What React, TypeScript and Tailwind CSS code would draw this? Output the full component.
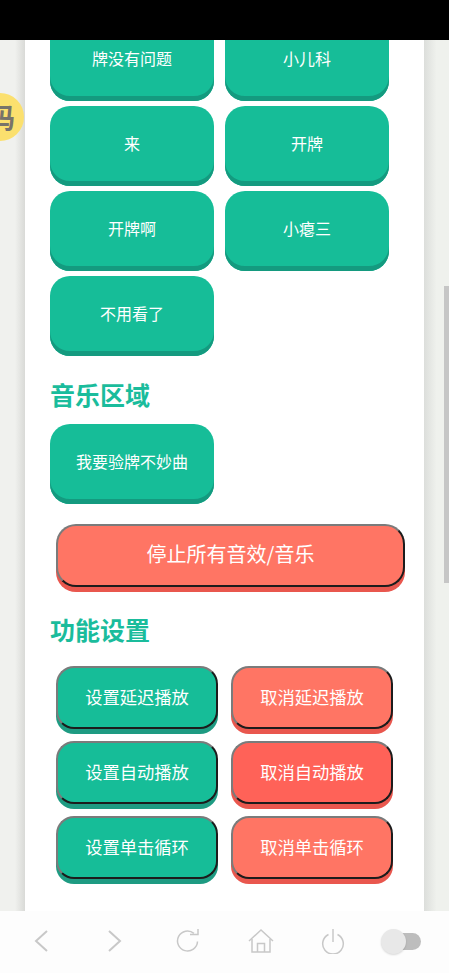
const font = "font-['Noto_Sans_CJK_SC','Noto_Sans',sans-serif]";

const soundRows = [
  ["牌没有问题", "小儿科"],
  ["来", "开牌"],
  ["开牌啊", "小瘪三"],
  ["不用看了"],
];

const settings = [
  ["设置延迟播放", "取消延迟播放", "bg-[#ff7564]"],
  ["设置自动播放", "取消自动播放", "bg-[#ff6258]"],
  ["设置单击循环", "取消单击循环", "bg-[#ff7564]"],
];

function SoundButton({ label }: { label: string }) {
  return (
    <button className="flex h-20 w-[164px] items-center justify-center rounded-[20px] bg-[#16bd98] pb-[7px] text-base text-white shadow-[inset_0_-5px_0_#149a7f]">
      {label}
    </button>
  );
}

function SettingButton({ label, red, face }: { label: string; red?: boolean; face?: string }) {
  return (
    <button
      className={`flex h-[63px] w-[162px] items-center justify-center rounded-[18px] border-2 border-t-[#7b7b7b] border-r-[#1c1c1c] border-b-[#1c1c1c] border-l-[#7b7b7b] pb-[2px] text-[17.3px] text-white ${
        red ? `${face} shadow-[0_5px_0_#e9574e]` : "bg-[#16bd98] shadow-[0_5px_0_#1e9b82]"
      }`}
    >
      {label}
    </button>
  );
}

export default function App() {
  return (
    <div className={`flex h-[973px] w-[449px] flex-col overflow-hidden bg-white ${font}`}>
      <div className="h-10 shrink-0 bg-black" />
      <div className="relative flex h-[871px] shrink-0 overflow-hidden">
        <div className="w-[25px] shrink-0 bg-gradient-to-r from-[#f0f1ee] from-60% to-[#d9dad7]" />
        <div className="w-[399px] shrink-0 bg-white pl-[25px]">
          <div className="-mt-[19px] grid grid-cols-[164px_164px] gap-x-[11px] gap-y-[5px]">
            {soundRows.flat().map((label) => (
              <SoundButton key={label} label={label} />
            ))}
          </div>
          <h2 className="mt-5 h-[36px] text-[25px] leading-[36px] font-bold text-[#1abc9c]">音乐区域</h2>
          <div className="mt-3">
            <SoundButton label="我要验牌不妙曲" />
          </div>
          <button className="mt-5 ml-[6px] flex h-[63px] w-[349px] items-center justify-center rounded-[20px] border-2 border-t-[#7b7b7b] border-r-[#1c1c1c] border-b-[#1c1c1c] border-l-[#7b7b7b] bg-[#ff7564] pb-[3px] text-xl text-white shadow-[0_5px_0_#e9574e]">
            停止所有音效/音乐
          </button>
          <h2 className="mt-6 h-[36px] text-[25px] leading-[36px] font-bold text-[#1abc9c]">功能设置</h2>
          <div className="mt-[19px] ml-[6px] flex flex-col gap-[12px]">
            {settings.map(([left, right, face]) => (
              <div key={left} className="flex gap-[13px]">
                <SettingButton label={left} />
                <SettingButton label={right} red face={face} />
              </div>
            ))}
          </div>
        </div>
        <div className="relative w-[25px] shrink-0 bg-gradient-to-r from-[#dcdedb] to-[#eff1ed] to-50%">
          <div className="absolute top-[246px] right-0 h-[297px] w-[5px] bg-[#c6c6c6]" />
        </div>
        <div className="absolute top-[53px] -left-[24px] flex h-12 w-12 items-center justify-end rounded-full bg-[#fbe06e] pr-[9px] text-[28px] font-bold text-[#77736a]">
          码
        </div>
      </div>
      <nav className="flex h-[62px] shrink-0 items-center bg-[#fdfdfd] pb-[2px] text-[#c8c8c8]">
        <svg className="ml-[33px]" width="16" height="24" viewBox="0 0 16 24" fill="none" stroke="currentColor" strokeWidth="2">
          <path d="M14 2 3 12l11 10" />
        </svg>
        <svg className="ml-[57px]" width="16" height="24" viewBox="0 0 16 24" fill="none" stroke="currentColor" strokeWidth="2">
          <path d="M3 2l11 10L3 22" />
        </svg>
        <svg className="ml-[54px]" width="24" height="24" viewBox="0 0 24 24" fill="none" stroke="currentColor" strokeWidth="1.5">
          <path d="M21.5 12.5a10 10 0 1 1-3.6-8.2" />
          <path d="M14 5.5h8V0" />
        </svg>
        <svg className="ml-[48px]" width="26" height="26" viewBox="0 0 26 26" fill="none" stroke="currentColor" strokeWidth="1.5">
          <path d="M1 13 13 2l12 11" />
          <path d="M4 11v13h18V11" />
          <path d="M9.5 24v-8.5h7V24" />
        </svg>
        <svg className="ml-[47px]" width="24" height="26" viewBox="0 0 24 26" fill="none" stroke="currentColor" strokeWidth="1.5">
          <path d="M7.5 6.5a10.3 10.3 0 1 0 9 0" />
          <path d="M12 1v13" />
        </svg>
        <div className="relative ml-[36px] h-[17px] w-[40px]">
          <div className="absolute top-0 right-0 h-[17px] w-[26px] rounded-full bg-[#bdbdbd]" />
          <div className="absolute -top-1 left-0 h-[25px] w-[25px] rounded-full bg-[#e8e8e8] shadow-[0_1px_2px_rgba(0,0,0,0.15)]" />
        </div>
      </nav>
    </div>
  );
}
